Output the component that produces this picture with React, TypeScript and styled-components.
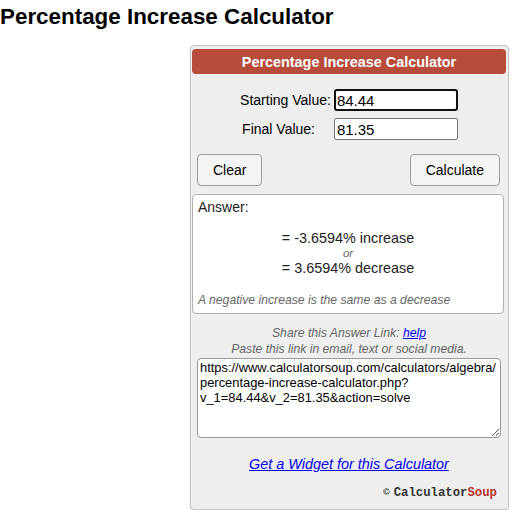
import React from "react";
import styled, { createGlobalStyle } from "styled-components";

/* Global */
const GlobalStyle = createGlobalStyle`
  body {
    margin: 0;
    background: #ffffff;
    font-family: "Liberation Sans", Arial, sans-serif;
    color: #000;
  }
`;

/* Styled Components */
const PageTitle = styled.h1`
  margin: 4px 0 0 0;
  font-size: 22.4px;
  line-height: 25px;
  font-weight: 700;
  color: #000;
`;

const Card = styled.div`
  box-sizing: border-box;
  width: 319px;
  margin: 16px 0 0 190px;
  padding: 3px 2px 9px 1px;
  background: #eeeeee;
  border: 1px solid #c4c4c4;
  border-radius: 4px;
  box-shadow: 0 1px 2px rgba(0, 0, 0, 0.12);
`;

const Header = styled.div`
  height: 25px;
  display: flex;
  align-items: center;
  justify-content: center;
  background: #b74c3b;
  border-radius: 4px;
  color: #ffffff;
  font-weight: 700;
  font-size: 14.4px;
`;

const Form = styled.div`
  margin-top: 15px;
  display: grid;
  grid-template-columns: auto auto;
  justify-content: center;
  align-items: center;
  column-gap: 3px;
  row-gap: 7px;
`;

const Label = styled.label<{ $indent?: number }>`
  font-size: 14px;
  padding-left: ${(p) => p.$indent ?? 0}px;
  color: #000;
`;

const Input = styled.input<{ $focused?: boolean }>`
  box-sizing: border-box;
  width: 124px;
  height: 22px;
  margin: 0;
  font-family: "Liberation Sans", Arial, sans-serif;
  font-size: 15px;
  color: #000;
  background: #fff;
  border: ${(p) => (p.$focused ? "2px solid #101010" : "1px solid #767676")};
  border-radius: ${(p) => (p.$focused ? "3px" : "2px")};
  padding: ${(p) => (p.$focused ? "0 1px" : "0 2px")};
  outline: none;
`;

const ButtonRow = styled.div`
  margin-top: 14px;
  padding: 0 6px 0 5px;
  display: flex;
  justify-content: space-between;
`;

const Button = styled.button`
  height: 32px;
  padding: 0 15px;
  font-family: "Liberation Sans", Arial, sans-serif;
  font-size: 14px;
  color: #000;
  background: #f4f4f4;
  border: 1px solid #9d9d9d;
  border-radius: 4px;
  cursor: pointer;
`;

const AnswerBox = styled.div`
  box-sizing: border-box;
  height: 120px;
  margin: 8px 2px 0 0;
  padding: 4px 5px 6px;
  background: #ffffff;
  border: 1px solid #b0b0b0;
  border-radius: 4px;
  color: #222;
`;

const AnswerLabel = styled.div`
  font-size: 14px;
  line-height: 16px;
`;

const Results = styled.div`
  margin-top: 15px;
  text-align: center;
`;

const ResultLine = styled.div`
  font-size: 14.4px;
  line-height: 16px;
`;

const OrLine = styled.div`
  font-size: 11.5px;
  line-height: 14px;
  font-style: italic;
  color: #666;
`;

const Note = styled.div`
  margin-top: 17px;
  font-size: 12.2px;
  line-height: 14px;
  font-style: italic;
  color: #666;
`;

const ShareText = styled.div`
  margin-top: 11px;
  text-align: center;
  font-size: 12.2px;
  line-height: 16px;
  font-style: italic;
  color: #666;

  a {
    color: #0000ee;
  }
`;

const LinkArea = styled.textarea`
  display: block;
  box-sizing: border-box;
  width: 304px;
  height: 80px;
  margin: 1px 0 0 5px;
  padding: 1px 1px 1px 2px;
  font-family: "Liberation Sans", Arial, sans-serif;
  font-size: 12.9px;
  line-height: 15px;
  color: #000;
  background: #fff;
  border: 1px solid #9a9a9a;
  border-radius: 4px;
`;

const WidgetLink = styled.a`
  display: block;
  margin-top: 18px;
  text-align: center;
  font-size: 14.4px;
  line-height: 17px;
  font-style: italic;
  color: #0000ee;
  text-decoration: underline;
`;

const Copyright = styled.div`
  margin-top: 12px;
  padding-right: 9px;
  text-align: right;
  font-family: "Liberation Mono", "Courier New", monospace;
  font-weight: 700;
  font-size: 12.3px;
  line-height: 14px;
  color: #333;
`;

const CopySign = styled.span`
  font-family: "Liberation Sans", Arial, sans-serif;
  font-size: 9px;
  margin-right: 4px;
  vertical-align: 1px;
`;

const Soup = styled.span`
  color: #b8322b;
`;

/* Components */
const URL =
  "https://www.calculatorsoup.com/calculators/algebra/percentage-increase-calculator.php?v_1=84.44&v_2=81.35&action=solve";

export default function App() {
  return (
    <>
      <GlobalStyle />
      <PageTitle>Percentage Increase Calculator</PageTitle>
      <Card>
        <Header>Percentage Increase Calculator</Header>
        <Form>
          <Label>Starting Value:</Label>
          <Input $focused defaultValue="84.44" />
          <Label $indent={2}>Final Value:</Label>
          <Input defaultValue="81.35" />
        </Form>
        <ButtonRow>
          <Button>Clear</Button>
          <Button>Calculate</Button>
        </ButtonRow>
        <AnswerBox>
          <AnswerLabel>Answer:</AnswerLabel>
          <Results>
            <ResultLine>= -3.6594% increase</ResultLine>
            <OrLine>or</OrLine>
            <ResultLine>= 3.6594% decrease</ResultLine>
          </Results>
          <Note>A negative increase is the same as a decrease</Note>
        </AnswerBox>
        <ShareText>
          Share this Answer Link: <a href="#">help</a>
          <br />
          Paste this link in email, text or social media.
        </ShareText>
        <LinkArea defaultValue={URL} readOnly />
        <WidgetLink href="#">Get a Widget for this Calculator</WidgetLink>
        <Copyright>
          <CopySign>©</CopySign>
          Calculator<Soup>Soup</Soup>
        </Copyright>
      </Card>
    </>
  );
}
